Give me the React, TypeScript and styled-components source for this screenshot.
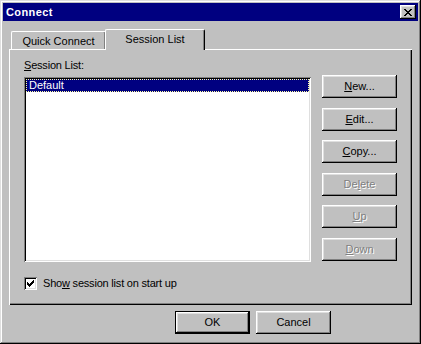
import React from "react";
import styled, { createGlobalStyle } from "styled-components";

const Global = createGlobalStyle`
  html, body { margin: 0; padding: 0; background: #c0c0c0; }
  body { font-family: "Liberation Sans", Arial, sans-serif; font-size: 11px; }
  * { box-sizing: border-box; }
`;

const Window = styled.div`
  width: 421px;
  height: 344px;
  background: #c0c0c0;
  padding: 3px;
  display: flex;
  flex-direction: column;
  box-shadow: inset -1px -1px #000, inset 1px 1px #dfdfdf, inset -2px -2px #808080, inset 2px 2px #fff;
  color: #000;
`;

const TitleBar = styled.div`
  height: 18px;
  background: #000080;
  display: flex;
  align-items: center;
  justify-content: space-between;
  padding: 0 2px 0 3px;
`;

const TitleText = styled.span`
  color: #fff;
  font-weight: bold;
  font-size: 11px;
  line-height: 13px;
  letter-spacing: 0.4px;
`;

const CloseButton = styled.div`
  width: 16px;
  height: 14px;
  background: #c0c0c0;
  display: flex;
  align-items: center;
  justify-content: center;
  box-shadow: inset -1px -1px #000, inset 1px 1px #fff, inset -2px -2px #808080, inset 2px 2px #dfdfdf;
  padding-right: 1px;
`;

const Body = styled.div`
  flex: 1;
  display: flex;
  flex-direction: column;
  padding: 8px 6px 0 6px;
`;

const TabStrip = styled.div`
  display: flex;
  align-items: flex-end;
  height: 20px;
  padding-left: 2px;
  position: relative;
  z-index: 1;
`;

const Tab = styled.div<{ $active?: boolean }>`
  background: #c0c0c0;
  display: flex;
  justify-content: center;
  border-top: 1px solid #fff;
  border-left: 1px solid #fff;
  border-right: 1px solid #000;
  border-radius: 2px 2px 0 0;
  box-shadow: inset -1px 0 #808080;
  width: ${(p) => (p.$active ? "100px" : "95px")};
  height: ${(p) => (p.$active ? "21px" : "18px")};
  margin-left: ${(p) => (p.$active ? "-1px" : "0")};
  margin-bottom: ${(p) => (p.$active ? "-1px" : "0")};
  padding-top: 3px;
  line-height: 13px;
  position: relative;
  z-index: ${(p) => (p.$active ? 2 : 1)};
`;

const Panel = styled.div`
  height: 256px;
  background: #c0c0c0;
  box-shadow: inset 1px 1px #fff, inset -1px -1px #000, inset -2px -2px #808080;
  padding: 10px 15px 0 15px;
  display: flex;
  flex-direction: column;
`;

const PanelMain = styled.div`
  display: flex;
  gap: 11px;
`;

const ListColumn = styled.div`
  width: 287px;
  display: flex;
  flex-direction: column;
`;

const Label = styled.div`
  line-height: 13px;
  height: 13px;
  margin-bottom: 5px;
  letter-spacing: -0.2px;
`;

const ListBox = styled.div`
  height: 185px;
  background: #fff;
  padding: 2px;
  box-shadow: inset 1px 1px #808080, inset -1px -1px #fff, inset 2px 2px #000, inset -2px -2px #dfdfdf;
`;

const ListItem = styled.div<{ $selected?: boolean }>`
  height: 13px;
  line-height: 12px;
  padding-left: 3px;
  background: ${(p) => (p.$selected ? "#000080" : "transparent")};
  color: ${(p) => (p.$selected ? "#fff" : "#000")};
  outline: ${(p) => (p.$selected ? "1px dotted #ffffa0" : "none")};
  outline-offset: -1px;
`;

const ButtonColumn = styled.div`
  display: flex;
  flex-direction: column;
  gap: 9px;
  margin-top: 16px;
  & > *:nth-child(even) {
    margin-top: 1px;
  }
`;

const Button = styled.div<{ $disabled?: boolean; $default?: boolean }>`
  width: 75px;
  height: 23px;
  background: #c0c0c0;
  display: flex;
  align-items: center;
  justify-content: center;
  line-height: 13px;
  padding-bottom: 1px;
  color: ${(p) => (p.$disabled ? "#808080" : "#000")};
  text-shadow: ${(p) => (p.$disabled ? "1px 1px 0 #fff" : "none")};
  border: ${(p) => (p.$default ? "1px solid #000" : "none")};
  box-shadow: inset -1px -1px #000, inset 1px 1px #fff, inset -2px -2px #808080, inset 2px 2px #dfdfdf;
`;

const CheckRow = styled.div`
  display: flex;
  align-items: center;
  gap: 6px;
  margin-top: 15px;
  height: 13px;
  line-height: 13px;
`;

const CheckLabel = styled.span`
  letter-spacing: -0.2px;
`;

const CheckBox = styled.div`
  width: 13px;
  height: 13px;
  background: #fff;
  box-shadow: inset 1px 1px #808080, inset -1px -1px #fff, inset 2px 2px #000, inset -2px -2px #dfdfdf;
  display: flex;
  align-items: center;
  justify-content: center;
`;

const Footer = styled.div`
  display: flex;
  justify-content: flex-end;
  gap: 6px;
  margin-top: 6px;
  padding-right: 81px;
`;

const CloseGlyph = () => (
  <svg width="8" height="7" viewBox="0 0 8 7" shapeRendering="crispEdges">
    <path
      fill="#000"
      d="M0 0h2v1H0zM6 0h2v1H6zM1 1h2v1H1zM5 1h2v1H5zM2 2h4v1H2zM3 3h2v1H3zM2 4h4v1H2zM1 5h2v1H1zM5 5h2v1H5zM0 6h2v1H0zM6 6h2v1H6z"
    />
  </svg>
);

const CheckGlyph = () => (
  <svg width="7" height="7" viewBox="0 0 7 7" shapeRendering="crispEdges">
    <path
      fill="#000"
      d="M6 0h1v1H6zM5 1h2v1H5zM0 2h1v1H0zM4 2h3v1H4zM0 3h2v1H0zM3 3h3v1H3zM0 4h5v1H0zM1 5h3v1H1zM2 6h1v1H2z"
    />
  </svg>
);

export default function App() {
  return (
    <>
      <Global />
      <Window>
        <TitleBar>
          <TitleText>Connect</TitleText>
          <CloseButton>
            <CloseGlyph />
          </CloseButton>
        </TitleBar>
        <Body>
          <TabStrip>
            <Tab>Quick Connect</Tab>
            <Tab $active>Session List</Tab>
          </TabStrip>
          <Panel>
            <PanelMain>
              <ListColumn>
                <Label>
                  <u>S</u>ession List:
                </Label>
                <ListBox>
                  <ListItem $selected>Default</ListItem>
                </ListBox>
              </ListColumn>
              <ButtonColumn>
                <Button>
                  <span>
                    <u>N</u>ew...
                  </span>
                </Button>
                <Button>
                  <span>
                    <u>E</u>dit...
                  </span>
                </Button>
                <Button>
                  <span>
                    <u>C</u>opy...
                  </span>
                </Button>
                <Button $disabled>
                  <span>
                    De<u>l</u>ete
                  </span>
                </Button>
                <Button $disabled>
                  <span>
                    <u>U</u>p
                  </span>
                </Button>
                <Button $disabled>
                  <span>
                    <u>D</u>own
                  </span>
                </Button>
              </ButtonColumn>
            </PanelMain>
            <CheckRow>
              <CheckBox>
                <CheckGlyph />
              </CheckBox>
              <CheckLabel>
                Sho<u>w</u> session list on start up
              </CheckLabel>
            </CheckRow>
          </Panel>
          <Footer>
            <Button $default>OK</Button>
            <Button>Cancel</Button>
          </Footer>
        </Body>
      </Window>
    </>
  );
}
